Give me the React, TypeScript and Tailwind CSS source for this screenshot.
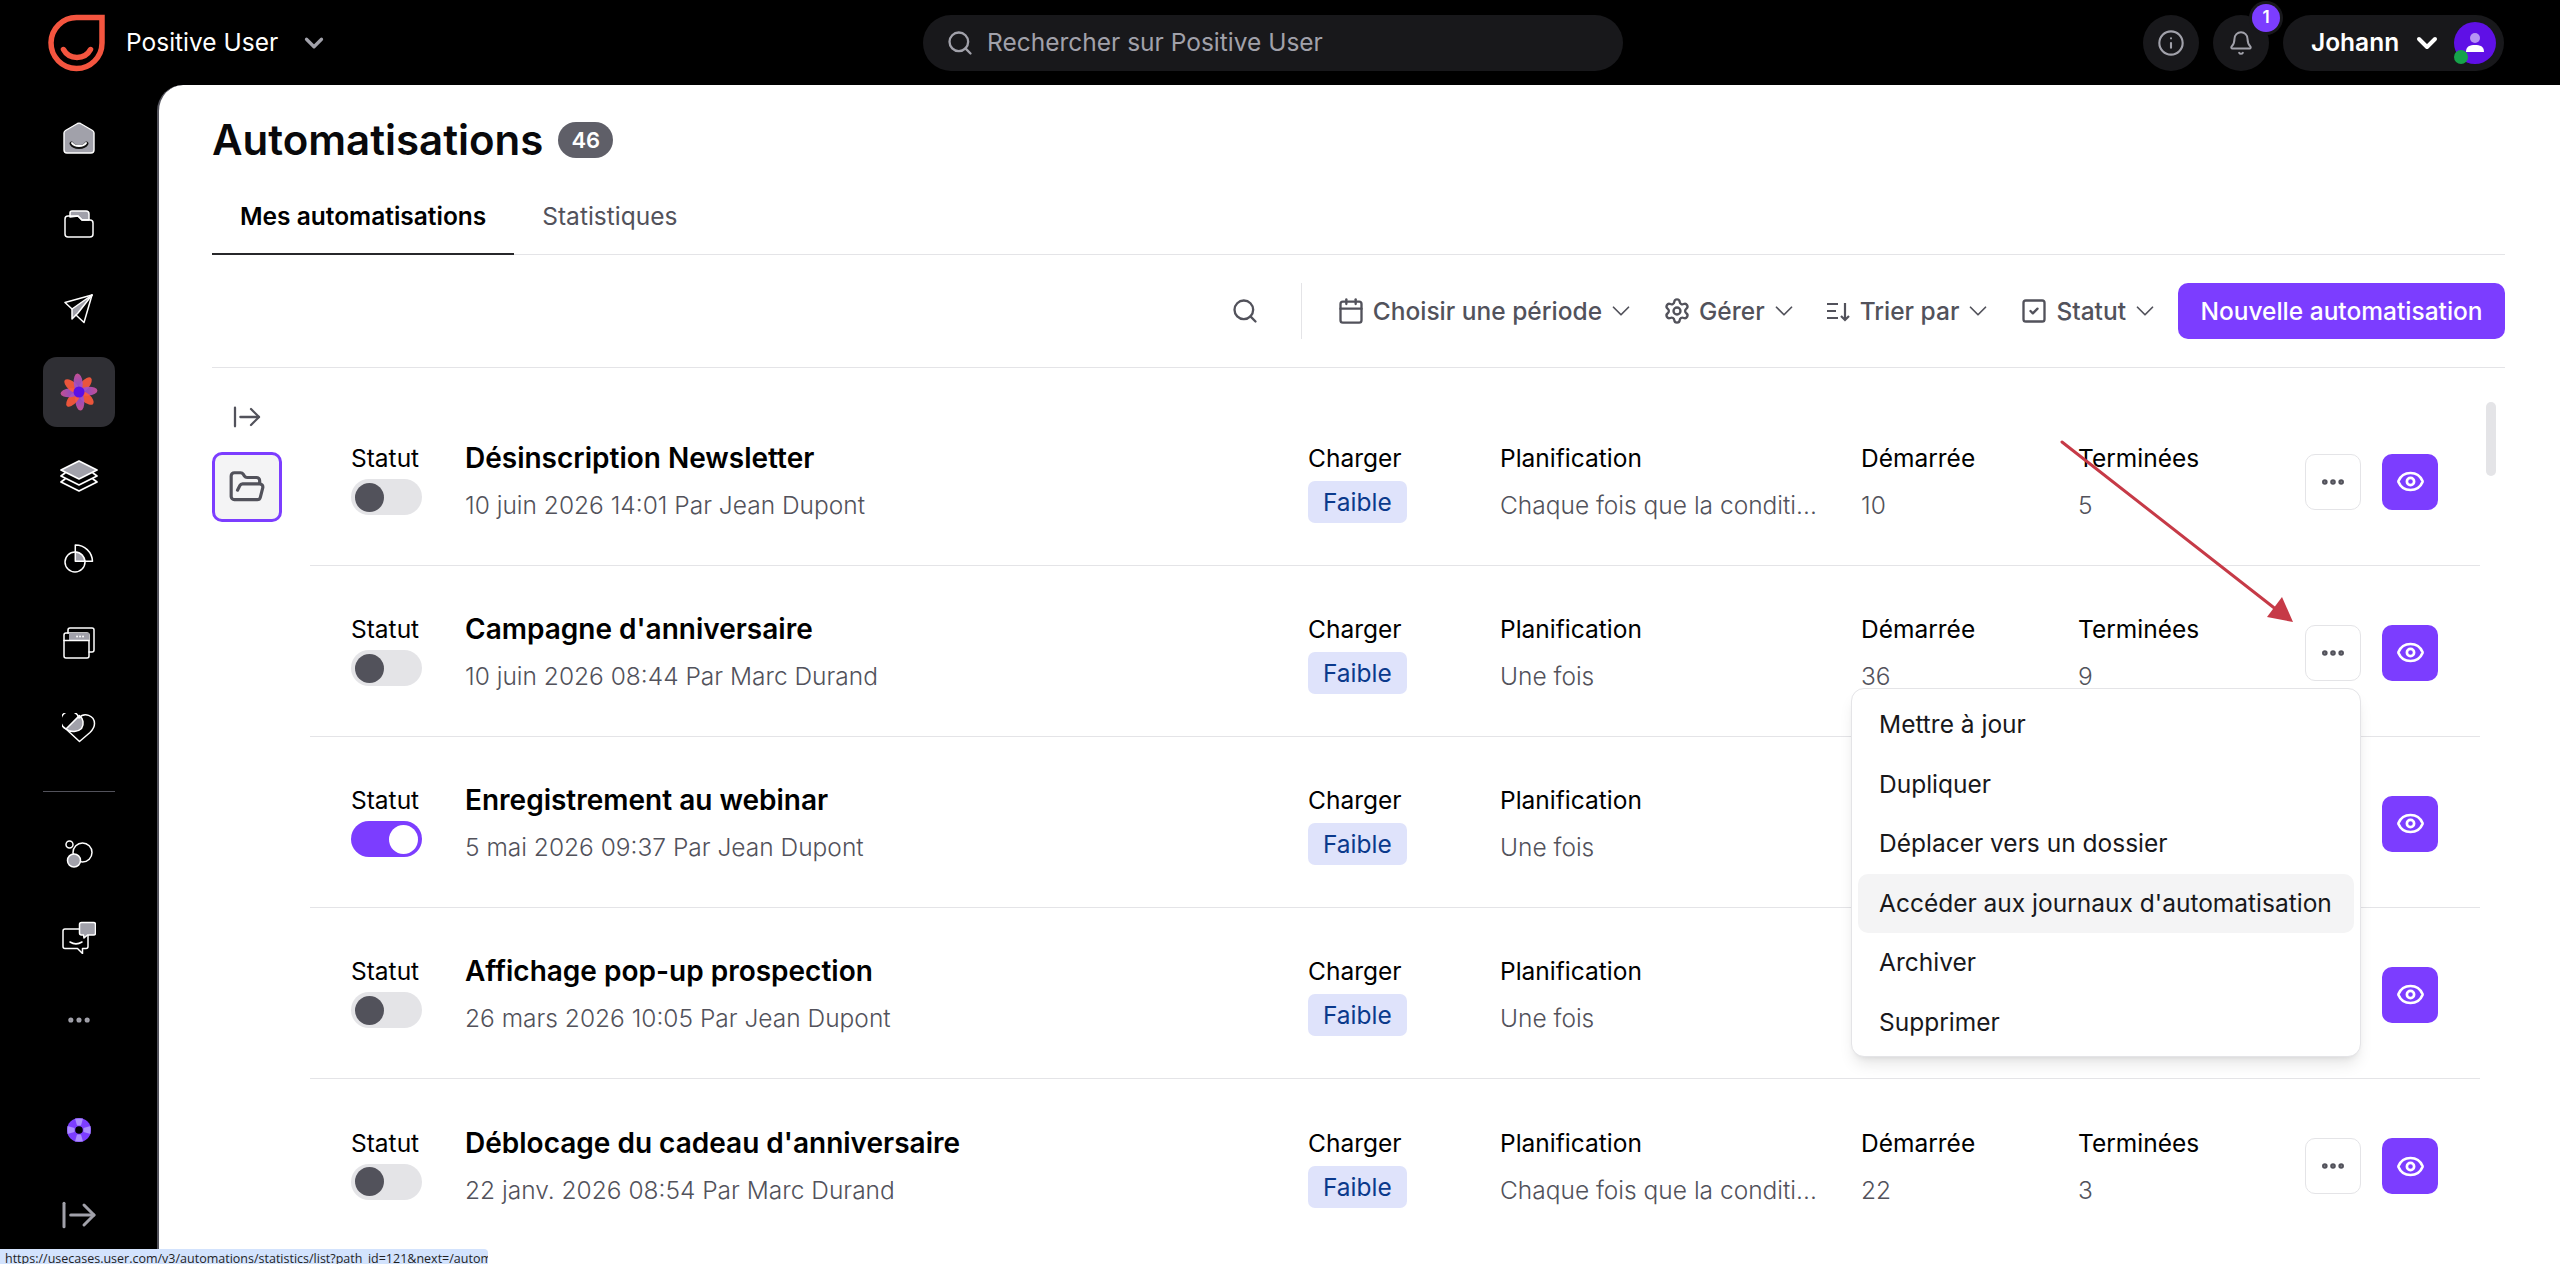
import { ArrowRightFromLine, Bell, Calendar, ChevronDown, Ellipsis, Eye, FolderOpen, Info, Search, Settings, SquareCheck } from 'lucide-react'

const rows = [
  { title: 'Désinscription Newsletter', meta: '10 juin 2026 14:01 Par Jean Dupont', plan: 'Chaque fois que la conditi...', started: '10', done: '5', on: false },
  { title: "Campagne d'anniversaire", meta: '10 juin 2026 08:44 Par Marc Durand', plan: 'Une fois', started: '36', done: '9', on: false },
  { title: 'Enregistrement au webinar', meta: '5 mai 2026 09:37 Par Jean Dupont', plan: 'Une fois', started: '128', done: '41', on: true },
  { title: 'Affichage pop-up prospection', meta: '26 mars 2026 10:05 Par Jean Dupont', plan: 'Une fois', started: '17', done: '6', on: false },
  { title: "Déblocage du cadeau d'anniversaire", meta: '22 janv. 2026 08:54 Par Marc Durand', plan: 'Chaque fois que la conditi...', started: '22', done: '3', on: false },
]

const menuItems = ['Mettre à jour', 'Dupliquer', 'Déplacer vers un dossier', "Accéder aux journaux d'automatisation", 'Archiver', 'Supprimer']

function Logo() {
  return (
    <svg width="58" height="58" viewBox="0 0 58 58" fill="none" stroke="#f4553f" strokeWidth="5.500">
      <path d="M54 3.500H29A25.500 25.500 0 1 0 54 29Z" />
      <path d="M15.500 35.500C21 46 37 46 42.500 35.500" strokeLinecap="round" />
    </svg>
  )
}

const line = { fill: 'none', stroke: '#fff', strokeWidth: 1.500, strokeLinejoin: 'round' as const, strokeLinecap: 'round' as const }

function HomeIcon() {
  return (
    <svg width="32" height="32" viewBox="0 0 32 32">
      <path d="M14.500 1.500Q16 0.800 17.500 1.500L29.500 8.500Q31 9.500 31 11V28Q31 31 28 31H4Q1 31 1 28V11Q1 9.500 2.500 8.500Z" fill="#a1a1aa" stroke="#fff" strokeWidth="1.400" />
      <path d="M8.500 21.500C11 26 21 26 23.500 21.500" fill="none" stroke="#111" strokeWidth="4" strokeLinecap="round" />
      <path d="M9 21C11.500 25 20.500 25 23 21" fill="none" stroke="#fff" strokeWidth="2" strokeLinecap="round" />
    </svg>
  )
}

function FolderIcon() {
  return (
    <svg width="30" height="28" viewBox="0 0 30 28" {...line}>
      <path d="M6 7V3Q6 1 8 1H22Q25 1 25 4V10H18L14 6Z" fill="#a1a1aa" />
      <path d="M1 9Q1 6 4 6H14L18 10H26Q29 10 29 13V24Q29 27 26 27H4Q1 27 1 24Z" />
    </svg>
  )
}

function PlaneIcon() {
  return (
    <svg width="30" height="30" viewBox="0 0 30 30" {...line}>
      <path d="M28 1L8 15L8 25L14 19Z" fill="#a1a1aa" />
      <path d="M28 1L1 8.500L8 15" />
      <path d="M28 1L20 28.500L12 21" />
    </svg>
  )
}

function FlowerIcon() {
  const angles = [0, 45, 90, 135, 180, 225, 270, 315]
  return (
    <svg width="38" height="38" viewBox="0 0 38 38">
      <defs>
        <linearGradient id="petal" x1="0" y1="0" x2="0" y2="1">
          <stop offset="0" stopColor="#d4539c" />
          <stop offset="1" stopColor="#7b4cf0" />
        </linearGradient>
      </defs>
      {angles.map((a, i) => (
        <ellipse key={a} cx="19" cy="10" rx="4.500" ry="9.500" fill={i % 2 === 0 ? '#ff5a3c' : 'url(#petal)'} opacity="0.9" transform={`rotate(${a + 40} 19 19)`} />
      ))}
      <circle cx="19" cy="19" r="5.500" fill="#5a10e6" />
    </svg>
  )
}

function LayersIcon() {
  return (
    <svg width="38" height="32" viewBox="0 0 38 32" {...line} strokeWidth="1.700">
      <path d="M5 13L1 16L19 25L37 16L33 13" />
      <path d="M5 19L1 22L19 31L37 22L33 19" />
      <path d="M19 1L37 10L19 19L1 10Z" fill="#a1a1aa" />
    </svg>
  )
}

function PieIcon() {
  return (
    <svg width="30" height="30" viewBox="0 0 30 30" {...line}>
      <path d="M11.300 7.300V17.300H21.300A10 10 0 0 0 11.300 7.300Z" fill="#a1a1aa" stroke="none" />
      <circle cx="11" cy="18" r="10" />
      <path d="M11.300 17.300V1A17 17 0 0 1 28.500 17.300Z" />
    </svg>
  )
}

function WindowsIcon() {
  return (
    <svg width="32" height="32" viewBox="0 0 32 32" {...line}>
      <path d="M5 6V3Q5 1 7 1H29Q31 1 31 3V23Q31 25 29 25H26" />
      <rect x="1" y="6" width="25" height="25" rx="2" />
      <path d="M6 6H26V13H6Z" fill="#a1a1aa" stroke="none" />
      <path d="M1 13.500H26" />
      <path d="M14 9.500H14.100M17 9.500H17.100M20 9.500H20.100" strokeWidth="1.800" />
    </svg>
  )
}

function HeartIcon() {
  return (
    <svg width="34" height="30" viewBox="0 0 34 30" {...line}>
      <path d="M4 16L17.400 2.600A9.500 9.500 0 0 1 19.500 15.500C16 19 9 20 4 16Z" fill="#a1a1aa" />
      <path d="M17 5A8.800 8.800 0 0 1 32.500 10.500C32.500 14 30.500 17 28 19.500L17.500 28.500L4 16A9.300 9.300 0 1 1 17 5Z" />
    </svg>
  )
}

function BubblesIcon() {
  return (
    <svg width="28" height="28" viewBox="0 0 28 28" {...line}>
      <circle cx="4.500" cy="4.500" r="3.500" />
      <circle cx="17.500" cy="12.500" r="9.500" />
      <circle cx="9" cy="20.500" r="6.500" fill="#a1a1aa" />
    </svg>
  )
}

function ChatIcon() {
  return (
    <svg width="34" height="33" viewBox="0 0 34 33" {...line}>
      <path d="M3 8H24Q26 8 26 10V25.500Q26 27.500 24 27.500H20.500V32.500L15.500 27.500H3Q1 27.500 1 25.500V10Q1 8 3 8Z" />
      <path d="M8 21C12 23.500 16 23.500 20 21" />
      <path d="M19.500 1.500H31.500Q33.500 1.500 33.500 3.500V12Q33.500 14 31.500 14H25.500L22 17L21.500 14H19.500Q17.500 14 17.500 12V3.500Q17.500 1.500 19.500 1.500Z" fill="#a1a1aa" />
    </svg>
  )
}

function RingIcon() {
  return (
    <svg width="24" height="24" viewBox="0 0 24 24">
      <circle cx="12" cy="12" r="12" fill="#7c3dff" />
      <path d="M8 0.500L16 0.500L14 7.500H10ZM8 23.500L16 23.500L14 16.500H10ZM0.500 8V16L7.500 14V10ZM23.500 8V16L16.500 14V10Z" fill="#ac8dff" />
      <circle cx="12" cy="12" r="3.800" fill="#000" />
    </svg>
  )
}

function SortIcon() {
  return (
    <svg width="26" height="26" viewBox="0 0 26 26" fill="none" stroke="#52525b" strokeWidth="2.200">
      <path d="M1 6H12M1 13H10M1 20H12" />
      <path d="M19 5V22M15 18L19 22L23 18" />
    </svg>
  )
}

function Filter({ icon, label }: { icon: React.ReactNode; label: string }) {
  return (
    <div className="flex items-center text-[24.5px] text-[#52525b]">
      {icon}
      <span className="ml-[8px] font-medium">{label}</span>
      <ChevronDown size={30} strokeWidth={1.400} className="ml-[4px]" />
    </div>
  )
}

function Toggle({ on }: { on: boolean }) {
  return (
    <div className={`mt-[5px] flex h-[36px] w-[71px] items-center rounded-full px-[4px] ${on ? 'justify-end bg-[#7c3dff]' : 'bg-[#e4e4e7]'}`}>
      <div className={`h-[29px] w-[29px] rounded-full ${on ? 'bg-white' : 'bg-[#52525b]'}`} />
    </div>
  )
}

function Cell({ label, value }: { label: string; value: string }) {
  return (
    <div className="flex flex-col gap-[15px]">
      <div className="text-[24.5px] leading-[32px] text-black">{label}</div>
      <div className="text-[24.5px] leading-[32px] font-light text-[#52525b]">{value}</div>
    </div>
  )
}

function Row({ row, last }: { row: (typeof rows)[number]; last: boolean }) {
  return (
    <div className={`grid h-[171px] grid-cols-[114px_843px_192px_361px_217px_227px_1fr] items-center pt-[3px] pl-[41px] ${last ? '' : 'border-b border-[#e4e4e7]'}`}>
      <div className="flex h-[79px] flex-col">
        <div className="text-[24.5px] leading-[32px] text-black">Statut</div>
        <Toggle on={row.on} />
      </div>
      <div className="flex flex-col gap-[15px]">
        <div className="text-[28px] leading-[32px] font-semibold text-black">{row.title}</div>
        <div className="text-[24.5px] leading-[32px] font-light text-[#52525b]">{row.meta}</div>
      </div>
      <div className="flex h-[79px] flex-col">
        <div className="text-[24.5px] leading-[32px] text-black">Charger</div>
        <div className="mt-[7px] w-fit rounded-[7px] bg-[#dfe3fb] px-[15px] text-[24.5px] leading-[42px] text-[#0b3a8c]">Faible</div>
      </div>
      <Cell label="Planification" value={row.plan} />
      <Cell label="Démarrée" value={row.started} />
      <Cell label="Terminées" value={row.done} />
      <div className="flex gap-[21px]">
        <div className="flex h-[56px] w-[56px] items-center justify-center rounded-[10px] border border-[#e4e4e7] bg-white text-[#52525b]">
          <Ellipsis size={28} strokeWidth={2.800} />
        </div>
        <div className="flex h-[56px] w-[56px] items-center justify-center rounded-[10px] bg-[#7c3dff] text-white">
          <Eye size={29} strokeWidth={2.200} />
        </div>
      </div>
    </div>
  )
}

function App() {
  return (
    <div className="relative flex h-screen flex-col overflow-hidden bg-black font-['Inter',sans-serif]">
      <header className="flex h-[85px] shrink-0 items-center">
        <div className="ml-[48px] flex w-[875px] items-center">
          <Logo />
          <span className="ml-[20px] text-[24.5px] text-white">Positive User</span>
          <ChevronDown size={30} strokeWidth={2.600} className="ml-[21px] text-[#a1a1aa]" />
        </div>
        <div className="flex h-[56px] w-[700px] items-center rounded-full bg-[#18181b] pl-[23px] text-[#a1a1aa]">
          <Search size={28} strokeWidth={2} />
          <span className="ml-[13px] text-[24.5px]">Rechercher sur Positive User</span>
        </div>
        <div className="mr-[56px] ml-auto flex items-center gap-[14px]">
          <div className="flex h-[56px] w-[56px] items-center justify-center rounded-full bg-[#18181b] text-[#a1a1aa]">
            <Info size={28} strokeWidth={1.800} />
          </div>
          <div className="relative flex h-[56px] w-[56px] items-center justify-center rounded-full bg-[#18181b] text-[#a1a1aa]">
            <Bell size={26} strokeWidth={1.800} />
            <div className="absolute top-[-11px] right-[-11px] flex h-[28px] w-[28px] items-center justify-center rounded-full bg-[#7c3dff] text-[17px] font-semibold text-white ring-[3px] ring-[#18181b]">1</div>
          </div>
          <div className="flex h-[56px] w-[221px] items-center rounded-full bg-[#18181b] pl-[28px]">
            <span className="text-[24.5px] font-semibold text-white">Johann</span>
            <ChevronDown size={32} strokeWidth={3} className="ml-[12px] text-white" />
            <div className="relative ml-[11px] flex h-[42px] w-[42px] items-center justify-center rounded-full bg-[#5f10e6]">
              <svg width="20" height="22" viewBox="0 0 20 22">
                <circle cx="10" cy="6" r="5" fill="#b794f4" />
                <path d="M1 20C1 14 5 13 10 13C15 13 19 14 19 20Z" fill="#fff" />
              </svg>
              <div className="absolute bottom-0 left-0 h-[14px] w-[14px] rounded-full bg-[#16a34a]" />
            </div>
          </div>
        </div>
      </header>
      <div className="flex min-h-0 flex-1">
        <aside className="flex w-[157px] shrink-0 flex-col items-center pt-[34px]">
          <div className="flex h-[38px] items-center"><HomeIcon /></div>
          <div className="mt-[48px] flex h-[38px] items-center"><FolderIcon /></div>
          <div className="mt-[47px] flex h-[38px] items-center"><PlaneIcon /></div>
          <div className="mt-[29px] flex h-[70px] w-[72px] items-center justify-center rounded-[14px] bg-[#2f2f34]"><FlowerIcon /></div>
          <div className="mt-[30px] flex h-[38px] items-center"><LayersIcon /></div>
          <div className="mt-[45px] flex h-[38px] items-center"><PieIcon /></div>
          <div className="mt-[46px] flex h-[38px] items-center"><WindowsIcon /></div>
          <div className="mt-[47px] flex h-[38px] items-center"><HeartIcon /></div>
          <div className="mt-[44px] h-px w-[72px] bg-[#52525b]" />
          <div className="mt-[43px] flex h-[38px] items-center"><BubblesIcon /></div>
          <div className="mt-[45px] flex h-[38px] items-center"><ChatIcon /></div>
          <div className="mt-[45px] flex h-[38px] items-center text-[#a1a1aa]"><Ellipsis size={28} strokeWidth={2.400} /></div>
          <div className="mt-[72px] flex h-[38px] items-center"><RingIcon /></div>
          <div className="mt-[47px] flex h-[38px] items-center text-[#a1a1aa]"><ArrowRightFromLine size={40} strokeWidth={1.800} /></div>
        </aside>
        <main className="min-w-0 flex-1 overflow-hidden rounded-tl-[26px] border-l-2 border-[#52525b] bg-white pr-[55px] pl-[53px]">
          <div className="flex items-center pt-[31px]">
            <h1 className="text-[42px] leading-[48px] font-semibold text-[#09090b]">Automatisations</h1>
            <span className="ml-[15px] rounded-full bg-[#5f5f68] px-[13px] text-[22px] leading-[36px] font-semibold text-white">46</span>
          </div>
          <div className="flex border-b border-[#e4e4e7]">
            <div className="mb-[-1px] border-b-2 border-[#27272a] px-[28px] pt-[36px] pb-[21px] text-[24.5px] leading-[32px] font-semibold text-black">Mes automatisations</div>
            <div className="px-[28px] pt-[36px] pb-[21px] text-[24.5px] leading-[32px] text-[#52525b]">Statistiques</div>
          </div>
          <div className="flex items-center justify-end border-b border-[#e4e4e7] pt-[28px] pb-[28px]">
            <Search size={28} strokeWidth={2} className="text-[#52525b]" />
            <div className="mr-[35px] ml-[42px] h-[56px] w-px bg-[#e4e4e7]" />
            <div className="flex items-center gap-[27px]">
              <Filter icon={<Calendar size={28} strokeWidth={2} />} label="Choisir une période" />
              <Filter icon={<Settings size={28} strokeWidth={2} />} label="Gérer" />
              <Filter icon={<SortIcon />} label="Trier par" />
              <Filter icon={<SquareCheck size={28} strokeWidth={2} />} label="Statut" />
            </div>
            <div className="ml-[18px] flex h-[56px] w-[327px] items-center justify-center rounded-[10px] bg-[#7c3dff] text-[24.5px] font-medium text-white">Nouvelle automatisation</div>
          </div>
          <div className="flex">
            <div className="flex w-[98px] shrink-0 flex-col items-start">
              <ArrowRightFromLine size={32} strokeWidth={1.700} className="mt-[33px] ml-[19px] text-[#52525b]" />
              <div className="mt-[19px] flex h-[70px] w-[70px] items-center justify-center rounded-[10px] border-[3px] border-[#7c3dff] bg-[#f4f4f5] text-[#52525b]">
                <FolderOpen size={38} strokeWidth={2} />
              </div>
            </div>
            <div className="mt-[27px] w-[2170px]">
              {rows.map((row, i) => (
                <Row key={row.title} row={row} last={i === rows.length - 1} />
              ))}
            </div>
          </div>
        </main>
      </div>

      <div className="absolute top-[402px] left-[2486px] h-[74px] w-[10px] rounded-full bg-[#e4e4e7]" />

      <svg className="absolute top-[430px] left-[2050px]" width="260" height="200" viewBox="0 0 260 200" fill="none">
        <path d="M12 12L232 184" stroke="#c63a47" strokeWidth="3" strokeLinecap="round" />
        <path d="M243 192L217 187L232 167Z" fill="#c63a47" />
      </svg>

      <div className="absolute top-[688px] left-[1851px] flex h-[369px] w-[510px] flex-col rounded-[13px] border border-[#e4e4e7] bg-white px-[6px] pt-[6px] shadow-lg">
        {menuItems.map((item, i) => (
          <div key={item} className={`flex h-[59.500px] shrink-0 items-center rounded-[10px] px-[21px] text-[24.5px] text-[#18181b] ${i === 3 ? 'bg-[#f4f4f5]' : ''}`}>
            {item}
          </div>
        ))}
      </div>

      <div className="absolute bottom-0 left-0 h-[15px] w-[488px] overflow-hidden rounded-tr-[4px] bg-[#d3e3fd] pl-[5px] font-['Open_Sans',sans-serif] text-[12.500px] leading-[20px] whitespace-nowrap text-[#1f1f1f]">
        https://usecases.user.com/v3/automations/statistics/list?path_id=121&amp;next=/automations
      </div>
    </div>
  )
}

export default App
